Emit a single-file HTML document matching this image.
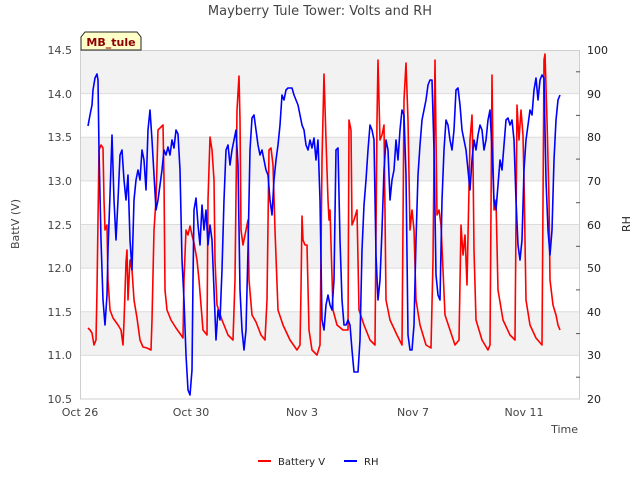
<!DOCTYPE html>
<html><head><style>
body{margin:0;background:#fff;}
svg{display:block;font-family:"DejaVu Sans","Liberation Sans",sans-serif;}
</style></head><body>
<svg width="640" height="480" viewBox="0 0 640 480">
<rect x="0" y="0" width="640" height="480" fill="#fff"/>
<rect x="80" y="50" width="500" height="349" fill="#fff"/>
<g fill="#f2f2f2">
<rect x="80" y="50" width="500" height="43.6"/>
<rect x="80" y="137.3" width="500" height="43.6"/>
<rect x="80" y="224.5" width="500" height="43.6"/>
<rect x="80" y="311.8" width="500" height="43.6"/>
</g>
<g stroke="#dcdcdc" stroke-width="1">
<line x1="80" x2="580" y1="93.6" y2="93.6"/><line x1="80" x2="580" y1="137.3" y2="137.3"/>
<line x1="80" x2="580" y1="180.9" y2="180.9"/><line x1="80" x2="580" y1="224.5" y2="224.5"/>
<line x1="80" x2="580" y1="268.1" y2="268.1"/><line x1="80" x2="580" y1="311.8" y2="311.8"/>
<line x1="80" x2="580" y1="355.4" y2="355.4"/>
</g>
<rect x="80.5" y="50.5" width="499" height="348.5" fill="none" stroke="#cfcfcf"/>
<g stroke="#555" stroke-width="1">
<line x1="576" x2="580" y1="71.8" y2="71.8"/><line x1="576" x2="580" y1="115.4" y2="115.4"/>
<line x1="576" x2="580" y1="159.1" y2="159.1"/><line x1="576" x2="580" y1="202.7" y2="202.7"/>
<line x1="576" x2="580" y1="246.3" y2="246.3"/><line x1="576" x2="580" y1="289.9" y2="289.9"/>
<line x1="576" x2="580" y1="333.6" y2="333.6"/><line x1="576" x2="580" y1="377.2" y2="377.2"/>
</g>
<g font-size="11" fill="#444" text-anchor="end">
<text x="72" y="54">14.5</text><text x="72" y="98">14.0</text><text x="72" y="141">13.5</text>
<text x="72" y="185">13.0</text><text x="72" y="229">12.5</text><text x="72" y="272">12.0</text>
<text x="72" y="316">11.5</text><text x="72" y="359">11.0</text><text x="72" y="403">10.5</text>
</g>
<g font-size="11" fill="#222">
<text x="587" y="54">100</text><text x="587" y="98">90</text><text x="587" y="141">80</text>
<text x="587" y="185">70</text><text x="587" y="229">60</text><text x="587" y="272">50</text>
<text x="587" y="316">40</text><text x="587" y="359">30</text><text x="587" y="403">20</text>
</g>
<g font-size="11" fill="#444" text-anchor="middle">
<text x="80" y="416">Oct 26</text><text x="191" y="416">Oct 30</text><text x="302" y="416">Nov 3</text>
<text x="413" y="416">Nov 7</text><text x="524" y="416">Nov 11</text>
</g>
<text x="578" y="433" font-size="11" fill="#444" text-anchor="end">Time</text>
<text x="19" y="224" font-size="11" fill="#444" text-anchor="middle" transform="rotate(-90 19 224)">BattV (V)</text>
<text x="630" y="224" font-size="11" fill="#222" text-anchor="middle" transform="rotate(-90 630 224)">RH</text>
<text x="320" y="15" font-size="13" fill="#444" text-anchor="middle">Mayberry Tule Tower: Volts and RH</text>
<polyline fill="none" stroke="#f00" stroke-width="1.6" stroke-linejoin="round" points="88,328 90,330 92,333 94,345 96,340 97,290 99,150 101,145 103,148 104,200 105,230 107,225 108,280 110,310 113,318 118,325 121,330 123,345 124,322 126,262 127,250 128,300 129,280 130,260 132,270 134,300 137,318 140,340 143,347 147,348 151,350 152,320 154,230 156,200 158,130 161,127 163,125 164,180 165,290 167,310 171,320 176,328 181,335 183,338 184,280 186,230 188,235 190,226 192,235 194,243 197,260 199,280 203,330 207,335 208,200 210,137 212,150 214,180 215,260 217,305 222,320 228,335 233,340 235,280 237,110 239,76 240,120 241,230 243,245 246,230 248,220 249,280 252,315 256,322 261,335 265,340 267,300 269,150 271,148 273,165 275,230 278,310 283,325 290,340 297,350 300,345 301,290 302,216 303,240 305,245 307,245 309,330 312,350 317,355 320,345 322,160 324,74 326,140 328,200 329,220 330,210 333,310 337,325 343,330 348,330 349,120 351,130 352,225 354,220 357,210 359,310 364,325 370,340 375,345 377,120 378,60 380,140 382,135 384,125 386,300 390,320 397,335 402,345 404,100 406,63 408,120 410,230 412,210 414,230 416,300 420,325 426,345 431,348 433,260 435,60 437,215 439,210 441,225 445,315 450,330 455,345 459,340 461,225 463,255 465,235 467,285 470,140 472,115 473,160 474,250 476,320 482,340 488,350 490,345 492,75 493,160 494,210 496,200 498,290 503,320 510,335 515,340 517,105 519,140 521,110 523,135 524,180 526,300 530,325 536,338 542,345 544,60 545,54 547,120 549,200 550,280 553,305 556,315 558,325 560,330"/>
<polyline fill="none" stroke="#00f" stroke-width="1.6" stroke-linejoin="round" points="88,126 90,115 92,105 93,90 95,78 97,74 98,80 99,150 101,240 103,300 105,325 107,295 108,250 110,195 112,135 114,200 116,240 118,200 120,155 122,150 124,180 126,200 128,175 130,240 132,270 134,200 136,180 138,170 140,180 142,150 144,160 146,190 148,130 150,110 152,140 154,175 156,210 158,200 160,185 162,170 164,150 166,155 168,147 170,155 172,140 174,148 176,130 178,134 180,170 182,260 184,300 186,355 188,390 190,395 192,370 193,280 194,210 196,198 198,225 200,245 202,205 204,230 206,210 208,245 210,225 212,240 214,290 216,340 218,310 220,320 222,270 224,200 226,150 228,145 230,165 232,150 234,140 236,130 238,165 240,290 242,330 244,350 246,330 248,250 250,150 252,118 254,115 256,130 258,145 260,155 262,150 264,160 266,170 268,175 270,200 272,215 274,180 276,160 278,145 280,125 282,95 284,100 286,90 288,88 290,88 292,88 294,95 296,100 298,105 300,115 302,125 304,130 306,145 308,150 310,140 312,148 314,138 316,160 318,140 320,200 322,320 324,330 326,305 328,295 330,305 332,310 334,280 336,150 338,148 340,240 342,300 344,325 346,325 348,320 350,325 352,350 354,372 358,372 360,340 362,250 364,205 366,180 368,150 370,125 372,130 374,140 376,255 378,300 380,280 382,230 384,170 386,140 388,150 390,200 392,180 394,170 396,140 398,160 400,130 402,110 404,115 406,175 408,335 410,350 412,350 414,325 416,240 418,175 420,145 422,120 424,110 426,100 428,85 430,80 432,80 434,150 436,275 438,295 440,300 442,200 444,150 446,120 448,125 450,140 452,150 454,130 456,90 458,88 460,105 462,130 464,140 466,150 468,170 470,190 472,160 474,140 476,150 478,135 480,125 482,130 484,150 486,140 488,120 490,110 492,150 494,200 496,210 498,185 500,160 502,170 504,145 506,120 508,118 510,125 512,120 514,140 516,200 518,245 520,260 522,240 524,170 526,140 528,125 530,110 532,115 534,90 536,78 538,100 540,80 542,75 544,78 546,180 548,230 550,255 552,230 554,160 556,120 558,100 560,95"/>
<path d="M81,50 L81,37 L85,32 L137,32 L141,37 L141,50 Z" fill="#ffffc8" stroke="#222" stroke-width="1"/>
<text x="111" y="46" font-size="11" font-weight="bold" fill="#8b0000" text-anchor="middle">MB_tule</text>
<line x1="258" x2="271" y1="461" y2="461" stroke="#f00" stroke-width="2"/>
<text x="278" y="465" font-size="10" fill="#222">Battery V</text>
<line x1="344" x2="357" y1="461" y2="461" stroke="#00f" stroke-width="2"/>
<text x="364" y="465" font-size="10" fill="#222">RH</text>
</svg>
</body></html>
